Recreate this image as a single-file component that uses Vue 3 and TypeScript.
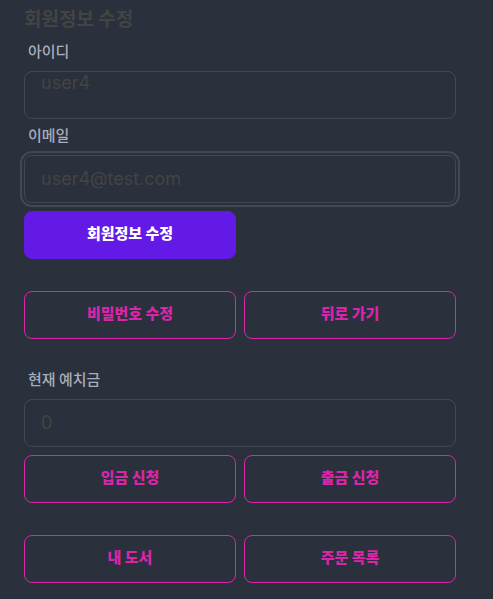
<script setup lang="ts">
import { ref } from 'vue'

const userId = ref('user4')
const email = ref('user4@test.com')
const deposit = ref('0')
</script>

<template>
  <main class="page">
    <form class="profile" @submit.prevent>
      <h1 class="title">회원정보 수정</h1>
      <label class="label" for="user-id">아이디</label>
      <output id="user-id" class="input">{{ userId }}</output>
      <label class="label" for="email">이메일</label>
      <input id="email" v-model="email" class="input focused" type="text" />
      <div class="row">
        <button class="btn primary" type="submit">회원정보 수정</button>
      </div>
    </form>

    <nav class="row section">
      <button class="btn" type="button">비밀번호 수정</button>
      <button class="btn" type="button">뒤로 가기</button>
    </nav>

    <section class="balance">
      <label class="label" for="deposit">현재 예치금</label>
      <input id="deposit" v-model="deposit" class="input" type="text" readonly />
      <div class="row">
        <button class="btn" type="button">입금 신청</button>
        <button class="btn" type="button">출금 신청</button>
      </div>
    </section>

    <nav class="row section">
      <button class="btn" type="button">내 도서</button>
      <button class="btn" type="button">주문 목록</button>
    </nav>
  </main>
</template>

<style>
body {
  background: #2a303c;
}
</style>

<style scoped>
.page {
  padding: 4px 37px 16px 24px;
  color: #444444;
  font-family: "Noto Sans CJK KR", sans-serif;
}

.profile {
  display: flex;
  flex-direction: column;
}

.title {
  margin: 0;
  padding-bottom: 3px;
  font-size: 19px;
  font-weight: 700;
  line-height: 28px;
}

.label {
  display: block;
  padding: 6px 4px 10px;
  color: #a6adbb;
  font-size: 15px;
  font-weight: 500;
  line-height: 20px;
}

.input {
  display: block;
  box-sizing: border-box;
  width: 100%;
  height: 48px;
  margin: 0;
  padding: 0 16px;
  border: 1px solid #434852;
  border-radius: 8px;
  outline: none;
  background: transparent;
  color: #444444;
  font-family: Inter, "Noto Sans CJK KR", sans-serif;
  font-size: 18px;
  line-height: 22px;
}

input.input {
  padding-bottom: 2px;
}

.focused {
  outline: 2px solid #434852;
  outline-offset: 2px;
}

.row {
  display: grid;
  grid-template-columns: 1fr 1fr;
  gap: 8px;
}

.input + .row {
  margin-top: 8px;
}

.section {
  margin-top: 32px;
}

.balance {
  margin-top: 24px;
}

.btn {
  height: 48px;
  padding: 0 16px 4px;
  border: 1px solid #d926a9;
  border-radius: 8px;
  background: transparent;
  color: #d926a9;
  font-family: inherit;
  font-size: 15px;
  font-weight: 900;
  line-height: 20px;
  cursor: pointer;
}

.primary {
  border-color: #641ae6;
  background: #641ae6;
  color: #ffffff;
}
</style>
